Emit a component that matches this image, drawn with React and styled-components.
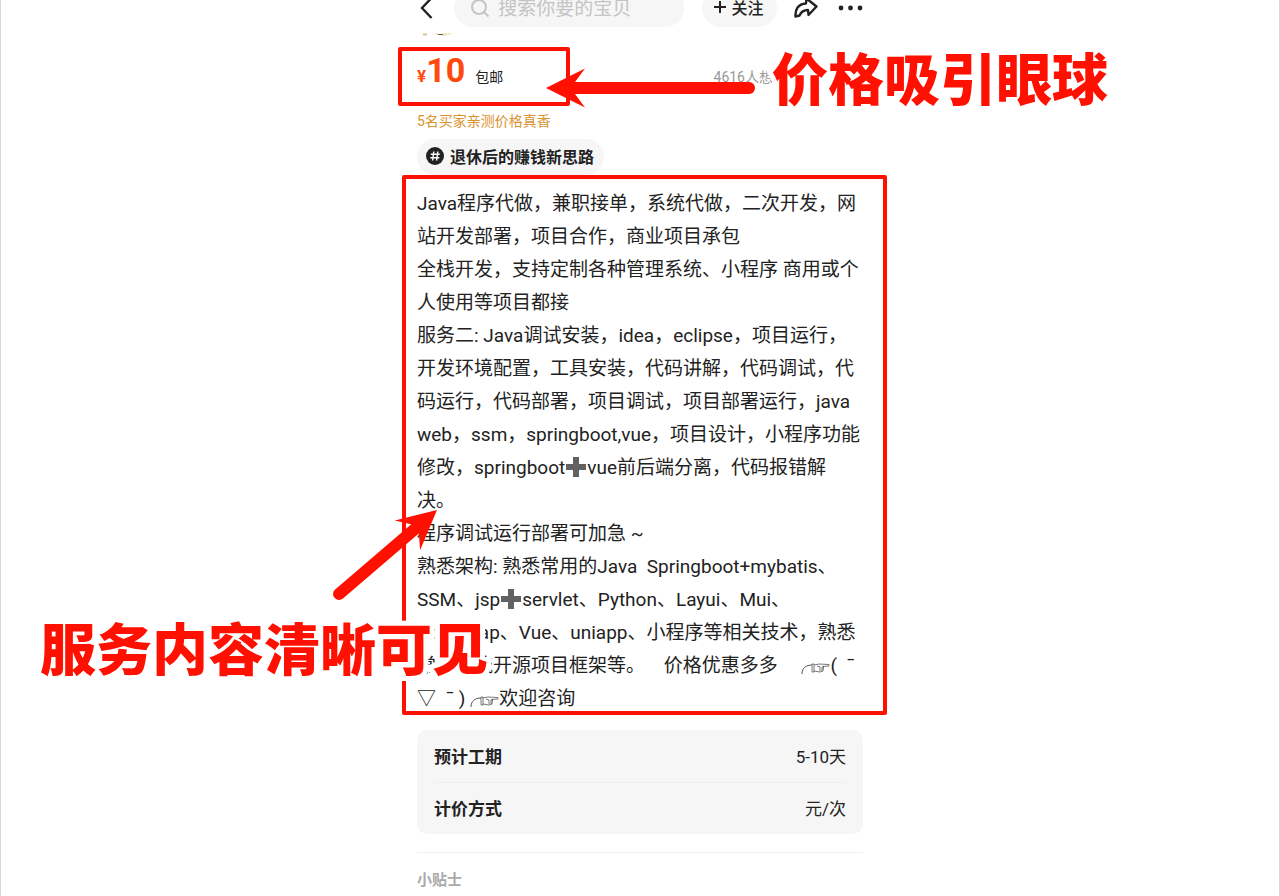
import React from 'react'
import styled, { createGlobalStyle } from 'styled-components'

const RED = '#ff1000'

const GlobalStyle = createGlobalStyle`
  * {
    box-sizing: border-box;
  }

  body {
    margin: 0;
    background: #fff;
    color: #222;
    font-family: Roboto, 'Noto Sans CJK SC', sans-serif;
  }
`

const Page = styled.div`
  min-height: 100vh;
  overflow: hidden;
  border: solid #d9d9d9;
  border-width: 0 1px;
`

const Column = styled.main`
  position: relative;
  max-width: 446px;
  margin: 0 auto;
`

const TopBar = styled.header`
  display: flex;
  align-items: flex-end;
  justify-content: space-between;
  height: 27px;
`

const IconButton = styled.button`
  display: flex;
  align-items: center;
  flex: none;
  height: 38px;
  padding: 0;
  border: 0;
  background: none;
  color: #222;
`

const Search = styled.label`
  display: flex;
  align-items: center;
  gap: 8px;
  width: 230px;
  height: 38px;
  padding: 0 16px;
  border-radius: 19px;
  background: #f6f6f6;
`

const SearchInput = styled.input`
  flex: 1;
  min-width: 0;
  padding: 0;
  border: 0;
  outline: 0;
  background: none;
  font: inherit;
  font-size: 19px;

  &::placeholder {
    color: #c4c4c4;
    opacity: 1;
  }
`

const Follow = styled.button`
  display: flex;
  align-items: center;
  justify-content: center;
  gap: 5px;
  width: 75px;
  height: 38px;
  padding: 0 0 2px;
  border: 0;
  border-radius: 19px;
  background: #f6f6f6;
  color: #222;
  font: inherit;
  font-size: 16px;
  font-weight: 500;
`

const Sliver = styled.svg`
  display: block;
  margin: 6px 0 0 5px;
`

const PriceRow = styled.section`
  position: relative;
  display: flex;
  align-items: baseline;
  height: 48px;
  margin-top: 11px;
  line-height: 46px;
`

const Price = styled.strong`
  color: #ff4a0c;
  font-size: 34px;
  font-weight: 700;
`

const Currency = styled.span`
  font-size: 17px;
`

const Shipping = styled.span`
  margin-left: 10px;
  font-size: 14px;
`

const Wants = styled.span`
  margin-left: auto;
  padding-right: 90px;
  color: #999;
  font-size: 14px;
`

const Praise = styled.p`
  margin: 15px 0 0;
  color: #d9932e;
  font-size: 14px;
  line-height: 22px;
`

const Topic = styled.a`
  display: flex;
  align-items: center;
  gap: 6px;
  width: fit-content;
  height: 36px;
  margin-top: 7px;
  padding: 0 10px 2px 9px;
  border-radius: 18px;
  background: #f6f6f6;
  color: #222;
  font-size: 16px;
  font-weight: 700;
  text-decoration: none;
`

const Description = styled.section`
  position: relative;
  padding: 12px 0 15px;
`

const Line = styled.p`
  height: 33px;
  margin: 0;
  font-size: 19px;
  line-height: 33px;
  white-space: pre;
`

const Plus = styled.svg`
  width: 22px;
  height: 22px;
  vertical-align: -4px;
`

const Hand = styled.svg`
  width: 29px;
  height: 16px;
  vertical-align: -3px;
`

const Details = styled.dl`
  margin: 0;
  padding: 0 17px;
  border-radius: 10px;
  background: #f6f6f6;
`

const Detail = styled.div`
  display: flex;
  align-items: center;
  justify-content: space-between;
  height: 52px;
  padding-bottom: 2px;
  font-size: 17px;

  & + & {
    border-top: 1px solid #eee;
  }
`

const DetailName = styled.dt`
  font-weight: 700;
`

const DetailValue = styled.dd`
  margin: 0;
`

const Tips = styled.h2`
  margin: 18px 0 0;
  padding-top: 16px;
  border-top: 1px solid #f1f1f1;
  color: #aaa;
  font-size: 15px;
  font-weight: 700;
  line-height: 22px;
`

/* red marks laid over the listing */
const Frame = styled.div`
  position: absolute;
  top: ${p => p.$top}px;
  bottom: ${p => p.$bottom}px;
  left: ${p => p.$left}px;
  width: ${p => p.$width}px;
  border: 4px solid ${RED};
  border-radius: 2px;
  pointer-events: none;
`

const Marks = styled.svg`
  position: absolute;
  top: 0;
  left: -100px;
  width: 500px;
  height: 620px;
  pointer-events: none;
`

const Note = styled.strong`
  position: absolute;
  top: ${p => p.$top}px;
  left: ${p => p.$left}px;
  color: ${RED};
  font-family: 'Noto Sans CJK SC', sans-serif;
  font-size: 56px;
  font-weight: 900;
  line-height: 80px;
  white-space: nowrap;
  -webkit-text-stroke: 10px #fff;
  paint-order: stroke fill;
`

const HeavyPlus = () => (
  <Plus viewBox='0 0 22 22' role='img' aria-label='加'>
    <path d='M8 1h6v7h7v6h-7v7H8v-7H1V8h7z' fill='#626262' />
  </Plus>
)

const PointingHand = () => (
  <Hand viewBox='0 0 29 16' fill='none' stroke='#555' role='img' aria-label='指'>
    <path d='M1 15C1 9 5 6 11 6' />
    <path d='M11 5v8h2V5zM13 6l5-1 10 .5v1.500l-7 .5M13 12l6 1 3-1 .5-5M18 9h5M18 11h4M16 7l3 1' strokeWidth='.8' />
  </Hand>
)

const Arrow = ({ x, y, angle, length }) => (
  <g transform={`translate(${x} ${y}) rotate(${angle})`} fill={RED}>
    <path d='M0 0L39 -19.5L29 -6V6L39 19.5Z' />
    <path d={`M28 0H${length}`} stroke={RED} strokeWidth='12' strokeLinecap='round' />
  </g>
)

const lines = [
  'Java程序代做，兼职接单，系统代做，二次开发，网',
  '站开发部署，项目合作，商业项目承包',
  '全栈开发，支持定制各种管理系统、小程序 商用或个',
  '人使用等项目都接',
  '服务二: Java调试安装，idea，eclipse，项目运行，',
  '开发环境配置，工具安装，代码讲解，代码调试，代',
  '码运行，代码部署，项目调试，项目部署运行，java',
  'web，ssm，springboot,vue，项目设计，小程序功能',
  <>修改，springboot<HeavyPlus />vue前后端分离，代码报错解</>,
  '决。',
  '程序调试运行部署可加急 ~',
  '熟悉架构: 熟悉常用的Java  Springboot+mybatis、',
  <>SSM、jsp<HeavyPlus />servlet、Python、Layui、Mui、</>,
  'Bootstrap、Vue、uniapp、小程序等相关技术，熟悉',
  <>常见主流开源项目框架等。    价格优惠多多     <PointingHand />(  ˉ</>,
  <>▽  ˉ ) <PointingHand />欢迎咨询</>
]

const details = [
  { name: '预计工期', value: '5-10天' },
  { name: '计价方式', value: '元/次' }
]

const App = () => (
  <Page>
    <GlobalStyle />
    <Column>
      <TopBar>
        <IconButton aria-label='返回'>
          <svg width='20' height='24' viewBox='0 0 20 24' fill='none' stroke='currentColor' strokeWidth='2.4'>
            <path d='M14.5 2L5 12l9.500 10' />
          </svg>
        </IconButton>
        <Search>
          <svg width='20' height='20' viewBox='0 0 20 20' fill='none' stroke='#c4c4c4' strokeWidth='2'>
            <circle cx='9' cy='9' r='7' />
            <path d='M14 14l4.500 4.500' />
          </svg>
          <SearchInput type='text' aria-label='搜索' placeholder='搜索你要的宝贝' />
        </Search>
        <Follow>
          <svg width='12' height='12' viewBox='0 0 12 12' stroke='currentColor' strokeWidth='2'>
            <path d='M6 0v12M0 6h12' />
          </svg>
          关注
        </Follow>
        <IconButton aria-label='分享'>
          <svg width='26' height='24' viewBox='0 0 26 24' fill='none' stroke='currentColor' strokeWidth='2.4' strokeLinejoin='round'>
            <path d='M12.500 2.500l10 8-8 8.500-.5-5C9 14 7 16 5.500 19.500L1.500 20.500C1 13.500 4 8 12 7.500z' />
          </svg>
        </IconButton>
        <IconButton aria-label='更多'>
          <svg width='26' height='6' viewBox='0 0 26 6' fill='currentColor'>
            <circle cx='4' cy='3' r='2.4' />
            <circle cx='13.500' cy='3' r='2.4' />
            <circle cx='23' cy='3' r='2.4' />
          </svg>
        </IconButton>
      </TopBar>
      <Sliver width='30' height='3' viewBox='0 0 30 3' fill='none'>
        <path d='M1 1.500h4' stroke='#d8c48c' strokeWidth='2' />
        <path d='M13 1h3M20 2h4' stroke='#e0d49a' />
        <path d='M16 1.500h5' stroke='#5f5c48' />
        <path d='M22 1h7' stroke='#e8d98a' />
      </Sliver>
      <PriceRow>
        <Price><Currency>¥</Currency>10</Price>
        <Shipping>包邮</Shipping>
        <Wants>4616人想</Wants>
        <Frame $top={0} $bottom={-11} $left={-19} $width={172} />
      </PriceRow>
      <Praise>5名买家亲测价格真香</Praise>
      <Topic href='#topic'>
        <svg width='18' height='18' viewBox='0 0 18 18'>
          <circle cx='9' cy='9' r='9' fill='#222' />
          <path d='M7.800 4.500l-1.200 9M11.800 4.500l-1.200 9M4.800 7.200h9M4.300 10.800h9' stroke='#fff' strokeWidth='1.400' />
        </svg>
        退休后的赚钱新思路
      </Topic>
      <Description>
        {lines.map((line, i) => <Line key={i}>{line}</Line>)}
        <Frame $top={0} $bottom={15} $left={-15} $width={485} />
      </Description>
      <Details>
        {details.map(({ name, value }) => (
          <Detail key={name}>
            <DetailName>{name}</DetailName>
            <DetailValue>{value}</DetailValue>
          </Detail>
        ))}
      </Details>
      <Tips>小贴士</Tips>
      <Marks viewBox='0 0 500 620'>
        <Arrow x={229} y={88} angle={0} length={203} />
        <Arrow x={120} y={510} angle={139.4} length={129} />
      </Marks>
      <Note $top={36} $left={355}>价格吸引眼球</Note>
      <Note $top={606} $left={-377}>服务内容清晰可见</Note>
    </Column>
  </Page>
)

export default App
